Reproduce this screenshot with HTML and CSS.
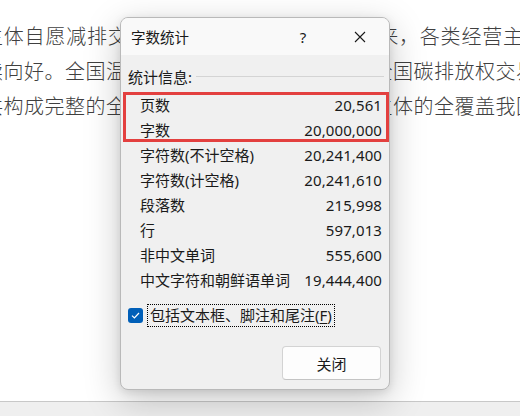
FILE: index.html
```html
<!DOCTYPE html>
<html lang="zh-CN">
<head>
<meta charset="utf-8">
<title>字数统计</title>
<link rel="stylesheet" href="styles.css">
</head>
<body>
<div class="doc">
  <p class="line l1">主体自愿减排交易市场建设稳步推进展望未来，各类经营主体</p>
  <p class="line l2">续向好。全国温室气体自愿减排交易市场与全国碳排放权交易市场</p>
  <p class="line l3">共构成完整的全国碳市场体系，实现对各类主体的全覆盖我国</p>
</div>
<div class="statusbar"></div>

<div class="dialog">
  <div class="titlebar">
    <span class="title">字数统计</span>
    <span class="help">?</span>
    <span class="close">
      <svg width="12" height="12" viewBox="0 0 12 12"><path d="M1 1L11 11M11 1L1 11" stroke="#1a1a1a" stroke-width="1.1" fill="none"/></svg>
    </span>
  </div>
  <div class="body">
    <div class="group-head"><span>统计信息:</span><span class="rule"></span></div>
    <div class="stats">
      <div class="hl">
        <div class="row"><span>页数</span><span class="num">20,561</span></div>
        <div class="row"><span>字数</span><span class="num">20,000,000</span></div>
      </div>
      <div class="row"><span>字符数(不计空格)</span><span class="num">20,241,400</span></div>
      <div class="row"><span>字符数(计空格)</span><span class="num">20,241,610</span></div>
      <div class="row"><span>段落数</span><span class="num">215,998</span></div>
      <div class="row"><span>行</span><span class="num">597,013</span></div>
      <div class="row"><span>非中文单词</span><span class="num">555,600</span></div>
      <div class="row"><span>中文字符和朝鲜语单词</span><span class="num">19,444,400</span></div>
    </div>
    <div class="check">
      <span class="box"><svg width="9" height="7" viewBox="0 0 9 7"><path d="M1 3.6L3.4 6L8 1" stroke="#fff" stroke-width="1.2" fill="none"/></svg></span>
      <span class="check-label">包括文本框、脚注和尾注(<u>F</u>)</span>
    </div>
    <div class="actions"><button class="btn">关闭</button></div>
  </div>
</div>
</body>
</html>
```

FILE: styles.css
```css
html, body {
  margin: 0;
  padding: 0;
  width: 520px;
  height: 416px;
  overflow: hidden;
  background: #ffffff;
}

.doc {
  height: 401px;
  padding-top: 18px;
  box-sizing: border-box;
  overflow: hidden;
  background: #ffffff;
}

.line {
  margin: 0 0 0 -17px;
  white-space: nowrap;
  font-family: "Noto Sans CJK SC", sans-serif;
  font-size: 20px;
  line-height: 35px;
  color: #404040;
  font-weight: 300;
}
.l1 { letter-spacing: 0.8px; }
.l2, .l3 { letter-spacing: 0.5px; }

.statusbar {
  height: 15px;
  border-top: 1px solid #c8c8c8;
  background: #efefef;
}

.dialog {
  position: absolute;
  left: 120px;
  top: 17px;
  width: 270px;
  height: 373px;
  box-sizing: border-box;
  border: 1px solid #b9b9b9;
  border-radius: 8px;
  background: #f0f0f0;
  overflow: hidden;
  box-shadow: 0 10px 36px rgba(0,0,0,0.22), 0 2px 8px rgba(0,0,0,0.10);
  font-family: "Noto Sans", "Noto Sans CJK SC", sans-serif;
  color: #1a1a1a;
  display: flex;
  flex-direction: column;
}

.titlebar {
  height: 37px;
  flex: none;
  background: #f9f9f9;
  display: flex;
  align-items: center;
  padding: 0 6px 0 10px;
}
.title {
  flex: 1;
  font-size: 14.5px;
}
.help {
  width: 46px;
  text-align: center;
  font-size: 15px;
  margin-right: 11px;
}
.close {
  width: 46px;
  display: flex;
  justify-content: center;
  align-items: center;
}

.body {
  flex: 1;
  display: flex;
  flex-direction: column;
  font-size: 15px;
}

.group-head {
  margin-top: 11px;
  height: 20px;
  display: flex;
  align-items: center;
  padding: 0 5px 0 7px;
}
.rule {
  flex: 1;
  height: 1px;
  background: #d4d4d4;
  margin-left: 4px;
}

.stats {
  margin-top: 6px;
}
.hl {
  position: relative;
}
.hl::after {
  content: "";
  position: absolute;
  top: 0;
  bottom: 0;
  left: 2px;
  right: 0;
  border: 3px solid #e3403f;
}
.row {
  height: 25px;
  display: flex;
  align-items: center;
  justify-content: space-between;
  padding: 0 7px 0 19px;
}
.num {
  letter-spacing: 0.1px;
}

.check {
  margin-top: 12px;
  height: 23px;
  display: flex;
  align-items: center;
  padding-left: 7px;
}
.box {
  width: 15px;
  height: 15px;
  border-radius: 3px;
  background: #005fb8;
  display: flex;
  align-items: center;
  justify-content: center;
  margin-right: 4px;
}
.check-label {
  height: 21px;
  line-height: 21px;
  border: 1px dotted #000;
  padding: 0 2px;
}
.check-label u {
  text-underline-offset: 2px;
}

.actions {
  margin-top: 19px;
  display: flex;
  justify-content: flex-end;
  padding-right: 8px;
}
.btn {
  width: 99px;
  height: 34px;
  background: #fdfdfd;
  border: 1px solid #d3d3d3;
  border-bottom-color: #c4c4c4;
  border-radius: 4px;
  font-family: "Noto Sans", "Noto Sans CJK SC", sans-serif;
  font-size: 15px;
  color: #1a1a1a;
  padding: 0;
}
```
